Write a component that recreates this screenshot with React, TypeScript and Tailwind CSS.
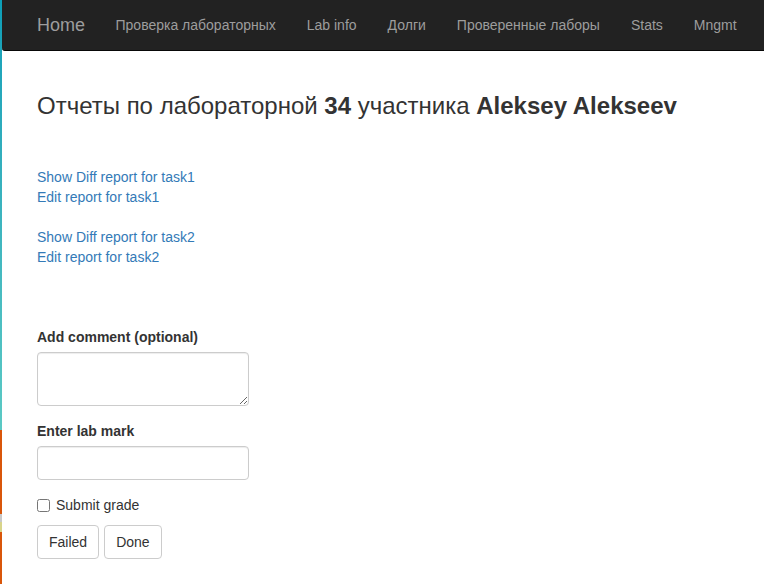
const navItems = ["Проверка лабораторных", "Lab info", "Долги", "Проверенные лаборы", "Stats", "Mngmt"];

const tasks = ["task1", "task2"];

export default function App() {
  return (
    <div
      className="flex min-h-[584px] w-full bg-white text-[#333] text-[14px] leading-[20px]"
      style={{ fontFamily: '"Liberation Sans", Arial, Helvetica, sans-serif' }}
    >
      {/* desktop showing behind the window */}
      <div className="flex w-[2px] shrink-0 flex-col">
        <div className="h-[430px] bg-gradient-to-b from-[#0a9fb8] to-[#5bc9c4]" />
        <div className="h-[84px] bg-[#d9560a]" />
        <div className="h-[8px] bg-[#c8c8c8]" />
        <div className="h-[10px] bg-[#d8d48a]" />
        <div className="flex-1 bg-[#d9560a]" />
      </div>

      <div className="flex flex-1 flex-col">
        <nav className="flex h-[51px] items-center rounded-bl-[3px] border-b border-[#080808] bg-[#222] pl-[20px]">
          <a className="px-[15px] text-[18px] leading-[20px] text-[#9d9d9d]">Home</a>
          <ul className="flex items-center">
            {navItems.map((item) => (
              <li key={item}>
                <a className="block px-[15.5px] text-[#9d9d9d]">{item}</a>
              </li>
            ))}
          </ul>
        </nav>

        <main className="flex flex-col px-[35px]">
          <h2 className="mt-[41px] text-[24px] leading-[27px] font-normal">
            Отчеты по лабораторной <b>34</b> участника <b>Aleksey Alekseev</b>
          </h2>

          <div className="mt-[48px] flex flex-col gap-[20px]">
            {tasks.map((t) => (
              <div key={t} className="flex flex-col items-start">
                <a className="text-[#337ab7]">Show Diff report for {t}</a>
                <a className="text-[#337ab7]">Edit report for {t}</a>
              </div>
            ))}
          </div>

          <form className="mt-[60px] flex flex-col items-start">
            <label className="mb-[5px] font-bold">Add comment (optional)</label>
            <textarea className="h-[54px] w-[212px] rounded-[4px] border border-[#ccc] px-[12px] py-[6px] shadow-[inset_0_1px_1px_rgba(0,0,0,0.075)]" />

            <label className="mt-[15px] mb-[5px] font-bold">Enter lab mark</label>
            <input
              type="text"
              className="h-[34px] w-[212px] rounded-[4px] border border-[#ccc] px-[12px] shadow-[inset_0_1px_1px_rgba(0,0,0,0.075)]"
            />

            <label className="mt-[15px] flex items-center gap-[6px]">
              <input type="checkbox" className="h-[13px] w-[13px]" />
              <span>Submit grade</span>
            </label>

            <div className="mt-[10px] flex gap-[5px]">
              <button type="button" className="h-[34px] rounded-[4px] border border-[#ccc] bg-white px-[11px]">
                Failed
              </button>
              <button type="button" className="h-[34px] rounded-[4px] border border-[#ccc] bg-white px-[11px]">
                Done
              </button>
            </div>
          </form>
        </main>
      </div>
    </div>
  );
}
